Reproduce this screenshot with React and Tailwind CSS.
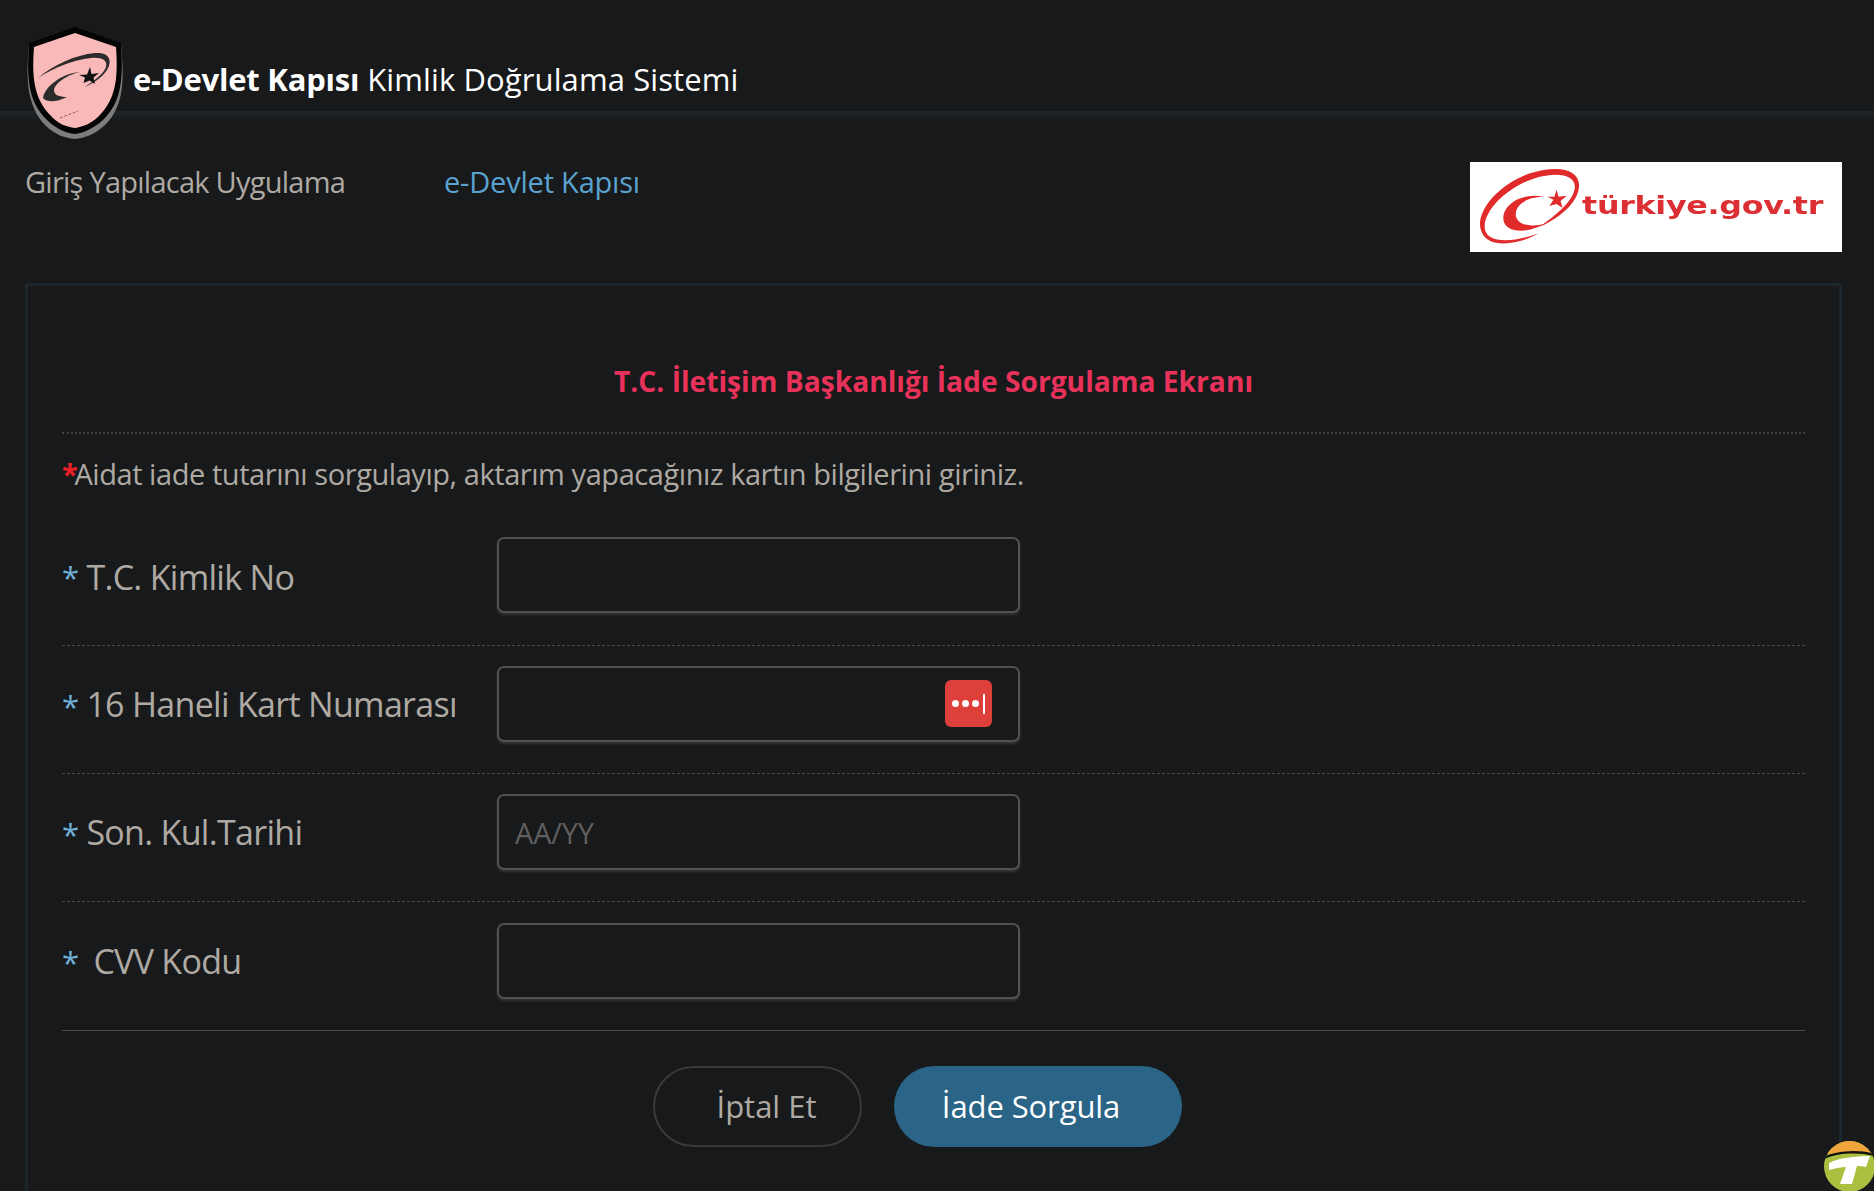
const dashed = "h-[128px] border-b border-dashed border-[#4a4b4c]";

const rows = [
  { label: "T.C. Kimlik No", gap: "ml-[8px] mt-[4px]", line: `pb-[13px] ${dashed}` },
  { label: "16 Haneli Kart Numarası", gap: "ml-[8px]", line: `pb-[11px] ${dashed}`, lastpass: true },
  { label: "Son. Kul.Tarihi", gap: "ml-[8px]", line: `pb-[11px] ${dashed}`, placeholder: "AA/YY" },
  { label: "CVV Kodu", gap: "ml-[15px]", line: "h-[129px] pb-[11px] border-b border-[#48494a]" },
];

function ShieldLogo() {
  return (
    <svg viewBox="0 0 100 112" className="absolute left-[25px] top-[27px] h-[112px] w-[100px]">
      <path d="M50 1 L96 17 C99 50 100 78 80 98 C68 109 58 111 50 112 C40 111 30 108 20 98 C1 78 1 50 4 17 Z" fill="#7d7d7d" />
      <path d="M50 0 L96 16 C98 48 98 74 78 93 C68 102 58 106 50 107 C41 106 31 102 22 93 C2 74 2 48 4 16 Z" fill="#050505" />
      <path d="M50 6 L91 20 C93 48 92 71 74 89 C66 97 57 100 50 101 C42 100 33 97 26 89 C8 71 7 48 9 20 Z" fill="#f9b9b9" />
      <path d="M13 51 C28 38 50 28 70 26 C84 25 88 33 82 43 C77 51 68 56 60 60 C68 54 78 48 81 40 C83 33 76 30 66 31 C48 33 28 41 13 51 Z" fill="#2b2b2b" />
      <path d="M55 45 C38 46 20 59 18 71 C22 76 32 75 42 70 C34 70 29 68 29 63 C30 56 42 48 55 45 Z" fill="#2b2b2b" />
      <path d="M65 40 L66.5 47 L74 46 L68.5 50.5 L70 57 L64.5 53.5 L58.5 56 L60 50.5 L54 48 L62 47.5 Z" fill="#111" />
      <path d="M35 91 L53 84" stroke="#8a5a5a" strokeWidth="1" strokeDasharray="3 1.5" />
    </svg>
  );
}

function TurkiyeLogo() {
  return (
    <div className="flex h-[90px] w-[372px] shrink-0 items-center overflow-hidden bg-white pl-[7px]">
      <svg viewBox="0 0 104 78" className="h-[82px] w-[106px] shrink-0 blur-[0.5px]">
        <path d="M4 62 C-2 46 18 18 52 6 C80 -3 102 2 100 20 C98 36 80 50 62 58 C74 49 94 35 96 20 C97 7 78 4 56 11 C26 21 4 46 8 62 C11 72 28 76 60 65 C44 75 10 82 4 62 Z" fill="#e12a2a" />
        <path d="M66 29 C46 24 24 36 26 52 C28 64 48 66 68 55 C52 60 38 56 38 46 C38 36 50 29 66 29 Z" fill="#e12a2a" />
        <path d="M78 22 L80 29 L88 28 L82 33 L84 40 L78 36 L71 38 L75 32 L69 29 L76 29 Z" fill="#e12a2a" />
      </svg>
      <span className="ml-[-1px] mt-[-2px] inline-block origin-left scale-x-[1.32] text-[24px] font-bold leading-none tracking-[-0.2px] text-[#dc2f34] blur-[0.4px] [font-family:'DejaVu_Sans',sans-serif]">
        türkiye.gov.tr
      </span>
    </div>
  );
}

function LastPassIcon() {
  return (
    <div className="absolute right-[28px] top-[14px] flex h-[47px] w-[47px] items-center justify-center gap-[3px] rounded-[6px] bg-[#dd3f3a]">
      <span className="h-[7px] w-[7px] rounded-full bg-white" />
      <span className="h-[7px] w-[7px] rounded-full bg-white" />
      <span className="h-[7px] w-[7px] rounded-full bg-white" />
      <span className="ml-[1px] h-[20px] w-[2px] bg-white" />
    </div>
  );
}

function FormRow({ row }) {
  return (
    <div className={`flex items-center ${row.line}`}>
      <label className="flex w-[435px] shrink-0 items-center text-[34px] font-normal leading-none tracking-[-0.7px] text-[#aeaaa3]">
        <span className="mt-1 text-[31px] text-[#6fb0d8]">*</span>
        <span className={row.gap}>{row.label}</span>
      </label>
      <div className="relative">
        <input
          placeholder={row.placeholder}
          className="block h-[76px] w-[523px] rounded-[7px] border-2 border-[#505152] bg-[#18191b] px-[16px] text-[29px] tracking-[-0.2px] text-[#aeaaa3] shadow-[0_2px_3px_rgba(255,255,255,0.12)] placeholder:text-[#5f5f5f]"
        />
        {row.lastpass ? <LastPassIcon /> : null}
      </div>
    </div>
  );
}

export default function App() {
  return (
    <div className="relative h-[1191px] w-full overflow-hidden bg-[#18191b] [font-family:'Open_Sans',sans-serif]">
      <header className="h-[111px] bg-[#18191b] pl-[133px] pt-[56px]">
        <h1 className="text-[31px] font-normal leading-[46px] tracking-[0.1px] text-white">
          <span className="font-bold tracking-[-0.24px]">e-Devlet Kapısı</span> Kimlik Doğrulama Sistemi
        </h1>
      </header>
      <div className="h-[9px] bg-gradient-to-b from-[#1d262c] to-[#18191b]" />
      <ShieldLogo />

      <div className="flex h-[163px] items-start pl-[25px] pr-[32px] pt-[42px]">
        <div className="w-[419px] shrink-0 text-[29px] font-normal leading-[40px] tracking-[-0.75px] text-[#aeaaa3]">
          Giriş Yapılacak Uygulama
        </div>
        <div className="flex-1 text-[29px] leading-[40px] tracking-[-0.2px] text-[#5ba3cf]">e-Devlet Kapısı</div>
        <TurkiyeLogo />
      </div>

      <main className="ml-[25px] mr-[32px] h-[920px] rounded-[3px] border-[3px] border-[#1c272d] px-[34px] pt-[70px]">
        <h2 className="h-[78px] border-b-2 border-dotted border-[#3f4041] text-center text-[28.2px] font-bold leading-[50px] text-[#e8325a]">
          T.C. İletişim Başkanlığı İade Sorgulama Ekranı
        </h2>
        <p className="mt-[20px] h-[64px] text-[29px] font-normal leading-[40px] tracking-[-0.44px] text-[#aeaaa3]">
          <span className="mr-[-3px] font-bold text-[#ea2027]">*</span>Aidat iade tutarını sorgulayıp, aktarım yapacağınız kartın bilgilerini giriniz.
        </p>
        {rows.map((row) => (
          <FormRow key={row.label} row={row} />
        ))}
        <div className="mt-[35px] flex justify-center gap-[32px] pr-[32px]">
          <button className="h-[81px] w-[209px] rounded-full border-2 border-[#3a3a3b] pl-[18px] text-[31px] text-[#aeaaa3]">
            İptal Et
          </button>
          <button className="h-[81px] w-[288px] rounded-full bg-[#2a6487] pr-[14px] text-[31px] tracking-[-0.1px] text-white">
            İade Sorgula
          </button>
        </div>
      </main>

      <div className="absolute bottom-[-1px] right-[-1px] h-[51px] w-[51px] overflow-hidden rounded-full bg-[#a9c040]">
        <div className="h-[13px] bg-[#f0a63c]" />
        <svg viewBox="0 0 51 51" className="absolute inset-0 h-full w-full">
          <path d="M0 17 C14 10 36 10 51 14" stroke="#111" strokeWidth="2.5" fill="none" />
          <path d="M5 22 C14 17 32 15 46 15 L42 26 C38 25 35 25 33 25 L28 43 L16 43 L22 26 C18 26 12 27 5 29 Z" fill="#fff" />
        </svg>
      </div>
    </div>
  );
}
